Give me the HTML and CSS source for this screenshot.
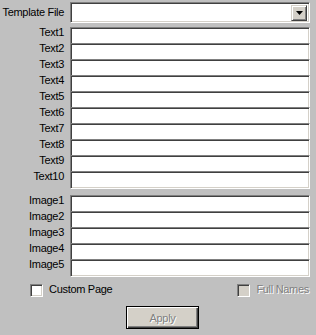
FILE: index.html
```html
<!DOCTYPE html>
<html>
  <head>
    <title>Template Settings</title>
    <link rel="stylesheet" href="styles.css">
  </head>
  <body>
    <div class="form">
      <div class="row template">
        <span class="lbl">Template File</span>
        <div class="field combo">
          <span class="drop">
            <svg width="7" height="4" viewBox="0 0 7 4"><path d="M0 0h7L3.5 4z" fill="#000"/></svg>
          </span>
        </div>
      </div>

      <div class="group texts">
        <div class="row"><span class="lbl">Text1</span><div class="field"></div></div>
        <div class="row"><span class="lbl">Text2</span><div class="field"></div></div>
        <div class="row"><span class="lbl">Text3</span><div class="field"></div></div>
        <div class="row"><span class="lbl">Text4</span><div class="field"></div></div>
        <div class="row"><span class="lbl">Text5</span><div class="field"></div></div>
        <div class="row"><span class="lbl">Text6</span><div class="field"></div></div>
        <div class="row"><span class="lbl">Text7</span><div class="field"></div></div>
        <div class="row"><span class="lbl">Text8</span><div class="field"></div></div>
        <div class="row"><span class="lbl">Text9</span><div class="field"></div></div>
        <div class="row"><span class="lbl">Text10</span><div class="field"></div></div>
      </div>

      <div class="group images">
        <div class="row"><span class="lbl">Image1</span><div class="field"></div></div>
        <div class="row"><span class="lbl">Image2</span><div class="field"></div></div>
        <div class="row"><span class="lbl">Image3</span><div class="field"></div></div>
        <div class="row"><span class="lbl">Image4</span><div class="field"></div></div>
        <div class="row"><span class="lbl">Image5</span><div class="field"></div></div>
      </div>

      <div class="options">
        <div class="check custom">
          <span class="box"></span>
          <span class="caption">Custom Page</span>
        </div>
        <div class="check names disabled">
          <span class="box"></span>
          <span class="caption">Full Names</span>
        </div>
      </div>

      <div class="actions">
        <button class="apply" disabled>Apply</button>
      </div>
    </div>
  </body>
</html>
```

FILE: styles.css
```css
body {
  margin: 0;
  background: #c0c0c0;
  font-family: "Liberation Sans", Arial, sans-serif;
  font-size: 11px;
  letter-spacing: -0.3px;
  color: #000;
}
.form {
  width: 316px;
  padding-top: 2px;
}
.row {
  display: grid;
  grid-template-columns: 64px 240px;
  column-gap: 6px;
  height: 16px;
}
.lbl {
  text-align: right;
  line-height: 11px;
  white-space: nowrap;
}
.field {
  position: relative;
  height: 18px;
  box-sizing: border-box;
  background: #fff;
  border: 1px solid;
  border-color: #808080 #fff #fff #808080;
  box-shadow: inset 1px 1px #404040, inset -1px -1px #d4d0c8;
}
.template {
  height: 21px;
}
.template .lbl {
  padding-top: 5px;
}
.combo {
  height: 21px;
  display: flex;
  justify-content: flex-end;
  padding: 2px;
}
.drop {
  width: 16px;
  height: 16px;
  box-sizing: border-box;
  display: flex;
  align-items: center;
  justify-content: center;
  background: #d4d0c8;
  border: 1px solid;
  border-color: #d4d0c8 #404040 #404040 #d4d0c8;
  box-shadow: inset 1px 1px #fff, inset -1px -1px #808080;
}
.texts {
  margin-top: 4px;
}
.images {
  margin-top: 8px;
}
.options {
  display: flex;
  justify-content: space-between;
  margin-top: 9px;
  padding: 0 7px 0 30px;
}
.check {
  display: flex;
  align-items: flex-start;
  gap: 6px;
}
.box {
  width: 13px;
  height: 13px;
  box-sizing: border-box;
  background: #fff;
  border: 1px solid;
  border-color: #808080 #fff #fff #808080;
  box-shadow: inset 1px 1px #404040, inset -1px -1px #d4d0c8;
}
.caption {
  line-height: 11px;
}
.disabled .box {
  background: #d4d0c8;
}
.disabled .caption {
  color: #808080;
  text-shadow: 1px 1px #fff;
}
.actions {
  margin-top: 9px;
  padding-left: 126px;
}
.apply {
  width: 73px;
  height: 23px;
  padding: 0;
  font: inherit;
  letter-spacing: inherit;
  color: #808080;
  text-shadow: 1px 1px #fff;
  background: #d4d0c8;
  border: 1px solid #000;
  box-shadow: inset 1px 1px #fff, inset -1px -1px #404040, inset -2px -2px #808080;
}
```
